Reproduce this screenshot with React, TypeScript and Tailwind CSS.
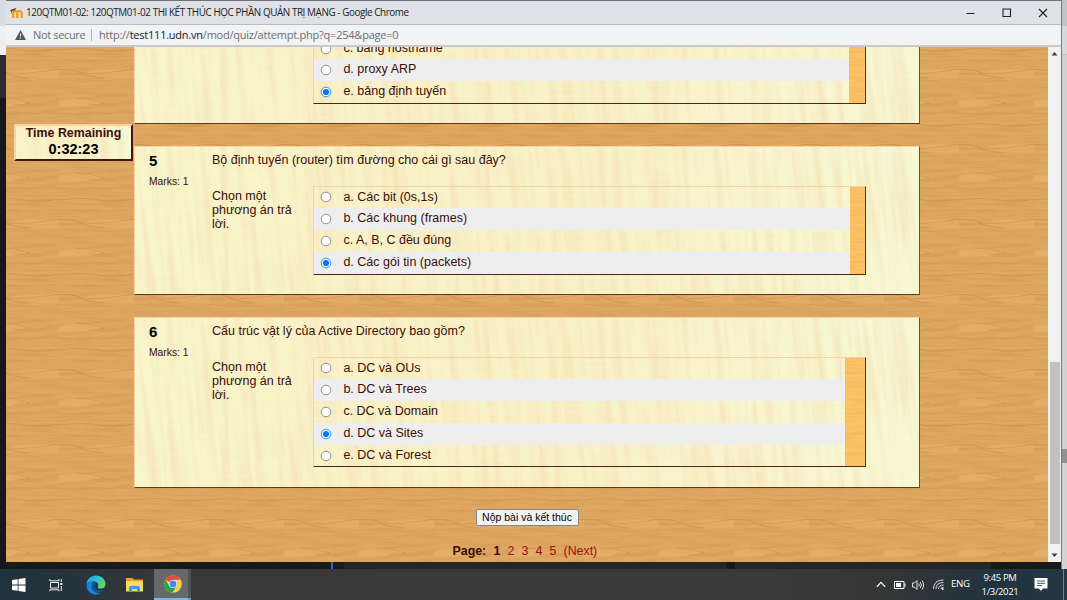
import type { ReactNode } from "react";

type Option = { label: string; checked?: boolean };

function WoodTexture() {
  return (
    <svg className="absolute inset-0 h-full w-full" aria-hidden="true">
      <defs>
        <filter id="wood-grain" x="0" y="0" width="100%" height="100%" colorInterpolationFilters="sRGB">
          <feTurbulence type="fractalNoise" baseFrequency="0.027 0.3" numOctaves="3" seed="8" stitchTiles="stitch" />
          <feColorMatrix values="0 0 0 0 0.74  0 0 0 0 0.49  0 0 0 0 0.24  2.2 0 0 0 -0.85" />
        </filter>
        <pattern id="wood" width="75" height="75" patternUnits="userSpaceOnUse" x="53" y="13">
          <rect width="75" height="75" fill="#dfa963" />
          <rect width="75" height="75" filter="url(#wood-grain)" opacity="0.33" />
          <path d="M0 40Q30 36 46 43Q30 47 0 46ZM75 10Q50 8 20 13Q40 18 75 17Z" fill="#e6b16c" opacity="0.6" />
          <g fill="none" stroke="#b97b38" strokeWidth="0.9" opacity="0.4">
            <path d="M0 10Q7 8 20 12T75 9" />
            <path d="M16 38Q32 38 46 43Q40 45 30 45" />
            <path d="M20 13Q30 17 45 18" />
            <path d="M0 65Q25 62 40 65T75 64" />
          </g>
        </pattern>
      </defs>
      <rect width="100%" height="100%" fill="url(#wood)" />
    </svg>
  );
}

function MapleTexture() {
  return (
    <svg className="absolute inset-0 h-full w-full" aria-hidden="true">
      <defs>
        <filter id="maple-grain" x="0" y="0" width="100%" height="100%" colorInterpolationFilters="sRGB">
          <feTurbulence type="fractalNoise" baseFrequency="0.13 0.009" numOctaves="3" seed="3" />
          <feColorMatrix values="0 0 0 0 0.95  0 0 0 0 0.76  0 0 0 0 0.56  2 0 0 0 -0.82" />
        </filter>
        <filter id="maple-cross" x="0" y="0" width="100%" height="100%" colorInterpolationFilters="sRGB">
          <feTurbulence type="fractalNoise" baseFrequency="0.012 0.3" numOctaves="2" seed="11" />
          <feColorMatrix values="0 0 0 0 1  0 0 0 0 1  0 0 0 0 0.86  1.4 0 0 0 -0.55" />
        </filter>
        <linearGradient id="maple-tone">
          <stop offset="0" stopColor="#f8f5cb" />
          <stop offset="0.2" stopColor="#f8f2c8" />
          <stop offset="0.55" stopColor="#f8f1c6" />
          <stop offset="0.75" stopColor="#f8f3cc" />
          <stop offset="1" stopColor="#f6f8d3" />
        </linearGradient>
      </defs>
      <rect width="100%" height="100%" fill="url(#maple-tone)" />
      <g transform="skewX(5)">
        <rect x="-40" width="900" height="240" filter="url(#maple-grain)" opacity="0.32" />
      </g>
      <rect width="100%" height="100%" filter="url(#maple-cross)" opacity="0.25" />
    </svg>
  );
}

function AmberTexture() {
  return (
    <svg className="absolute inset-0 h-full w-full" aria-hidden="true">
      <rect width="100%" height="100%" fill="#fdc166" />
      <rect width="100%" height="100%" filter="url(#wood-grain)" opacity="0.15" />
    </svg>
  );
}

function Radio({ checked }: { checked?: boolean }) {
  return (
    <svg width="12" height="12" viewBox="0 0 12 12" className="shrink-0">
      <circle cx="6" cy="6" r="4.8" fill="#fff" stroke={checked ? "#2684f5" : "#858585"} strokeWidth="0.9" />
      {checked && <circle cx="6" cy="6" r="3.1" fill="#0875f5" />}
    </svg>
  );
}

function Options({ options, gutter }: { options: Option[]; gutter: string }) {
  return (
    <div className="relative flex w-[553px] border border-t-[#fbd0a0] border-r-[#65351d] border-b-[#54251b] border-l-[#fbd0a0]">
      <div className="min-w-0 flex-1">
        {options.map((o, i) => (
          <div key={o.label} className={`flex h-[21.8px] items-center pl-[6px] ${i % 2 ? "bg-[#eeeeee]" : ""}`}>
            <Radio checked={o.checked} />
            <span className="-mt-px ml-[11.4px] whitespace-nowrap">{o.label}</span>
          </div>
        ))}
      </div>
      <div className={`relative shrink-0 ${gutter}`}>
        <AmberTexture />
      </div>
    </div>
  );
}

function Card({ className, children }: { className: string; children: ReactNode }) {
  return (
    <section
      className={`relative shrink-0 overflow-hidden border border-t-[#fcd3a0] border-r-[#7a4a25] border-b-[#5f3a1c] border-l-[#fcd3a0] ${className}`}
    >
      <MapleTexture />
      <div className="relative h-full">{children}</div>
    </section>
  );
}

function Question({ number, text, options, gutter }: { number: string; text: string; options: Option[]; gutter: string }) {
  return (
    <div className="flex pl-[14px]">
      <div className="w-[63px] pt-[5px]">
        <div className="text-[15px] leading-[18px] font-bold text-black">{number}</div>
        <div className="mt-[5px] text-[10.3px] leading-[13px]">Marks: 1</div>
      </div>
      <div>
        <div className="pt-[5px] leading-[16px] whitespace-nowrap">{text}</div>
        <div className="mt-[17.5px] flex">
          <div className="w-[101px] pt-[3.4px] pr-[14px] leading-[14px]">Chọn một phương án trả lời.</div>
          <Options options={options} gutter={gutter} />
        </div>
      </div>
    </div>
  );
}

function MoodleIcon() {
  return (
    <svg width="13" height="12" viewBox="0 0 13 12">
      <path d="M3.2 11V6.2Q3.2 4 5.2 4T7.3 6.2V11M7.3 6.2Q7.3 4 9.3 4T11.7 6.2V11" fill="none" stroke="#f59a0c" strokeWidth="2.2" />
      <path d="M0 3.2L6.5 .8L5 3.2L2 4L1.3 7L.8 4Z" fill="#50402c" />
    </svg>
  );
}

function TitleBar() {
  return (
    <header className="flex h-[24px] shrink-0 items-center border-b border-[#b9bcc1] bg-[#dee1e6] pl-[4px] text-[#202124]">
      <MoodleIcon />
      <span className="ml-[3px] text-[9.9px] tracking-[-0.42px] whitespace-nowrap">
        120QTM01-02: 120QTM01-02 THI KẾT THÚC HỌC PHẦN QUẢN TRỊ MẠNG - Google Chrome
      </span>
      <svg className="mr-[13px] ml-auto" width="82" height="10" viewBox="0 0 82 10" fill="none" stroke="#222" strokeWidth="1.1">
        <path d="M.5 5.5H8.5M73 1L81 9M81 1L73 9" />
        <path d="M37 1H44.5V8.5H37Z" />
      </svg>
    </header>
  );
}

function AddressBar() {
  return (
    <div className="flex h-[22px] shrink-0 items-center border-b-2 border-[#c7c9ce] bg-[#f1f3f5] pl-[9px] text-[11px] text-[#6b6e72]">
      <svg width="11" height="10" viewBox="0 0 11 10">
        <path d="M5.5 0L11 10H0Z" fill="#55585c" />
        <path d="M5.5 3.5V6.5M5.5 7.4V8.6" stroke="#f1f3f5" />
      </svg>
      <span className="ml-[7px] w-[52px] tracking-[-0.35px] whitespace-nowrap">Not secure</span>
      <span className="ml-[6px] h-[12px] w-px bg-[#aeb0b4]" />
      <span className="ml-[7px] tracking-[-0.23px] whitespace-nowrap">
        http://<span className="text-[#202124]">test111.udn.vn</span>/mod/quiz/attempt.php?q=254&amp;page=0
      </span>
    </div>
  );
}

function ScrollBar() {
  return (
    <div className="flex w-[13px] shrink-0 flex-col items-center bg-[#f1f1f1]">
      <svg width="11" height="14" viewBox="0 0 11 14">
        <path d="M2.5 8.5L5.5 5L8.5 8.5Z" fill="#444" />
      </svg>
      <div className="mt-[301px] h-[182px] w-[10px] bg-[#c1c1c1]" />
      <svg className="mt-auto" width="11" height="16" viewBox="0 0 11 16">
        <path d="M2.5 7.5L5.5 11L8.5 7.5Z" fill="#444" />
      </svg>
    </div>
  );
}

function EdgeIcon() {
  return (
    <svg width="20" height="20" viewBox="0 0 20 20">
      <defs>
        <linearGradient id="edge-top" x1="0" x2="1" y1="0.2" y2="0.6">
          <stop offset="0" stopColor="#18a5e8" />
          <stop offset="0.5" stopColor="#27c3d5" />
          <stop offset="1" stopColor="#67dc51" />
        </linearGradient>
      </defs>
      <path d="M.5 9C1 4 5 .5 10 .5C16 .5 19.5 5 19.5 8.8C19.5 12 17.3 13.7 14.5 13.7C12.3 13.7 11.3 12.7 11.8 11.8C14 8.5 10 5.8 6.2 6.3C3.5 6.6 1.4 8 .5 9Z" fill="url(#edge-top)" />
      <path d="M.5 9.4C1.8 6.7 5 5.7 8 6.4C6 8 5.3 10.3 6 13C7 17 11.3 18.7 15 17.5C13.5 19 11.7 19.5 10 19.5C4.5 19.5 .3 15 .5 9.4Z" fill="#1684d8" />
      <path d="M8 6.6C6 8 5.3 10.3 6 13C7.2 17.3 12.5 19.2 17.8 15.2C18.2 14.8 17.9 14.4 17.4 14.6C13.2 16.3 8.3 14.2 8.4 10.7C8.4 9.6 9 8.8 9.9 8.3C9.8 7.3 9 6.8 8 6.6Z" fill="#0b559f" />
    </svg>
  );
}

function FolderIcon() {
  return (
    <svg width="17" height="16" viewBox="0 0 17 16">
      <path d="M0 1H6.5L8 2.5H17V5H0Z" fill="#e9a526" />
      <path d="M0 4.2H17V14.5H0Z" fill="#ffd963" />
      <path d="M3 15V10.5Q3 9 4.5 9H12.5Q14 9 14 10.5V15H11V12H6V15Z" fill="#3d9de2" />
    </svg>
  );
}

function ChromeIcon() {
  return (
    <svg width="18" height="18" viewBox="0 0 18 18">
      <circle cx="9" cy="9" r="8.8" fill="#fbd04a" />
      <path d="M9 9L1.4 4.6A8.8 8.8 0 0 1 16.6 4.8H9Z" fill="#e04a3f" />
      <path d="M1.4 4.6A8.8 8.8 0 0 0 8.3 17.8L12.7 11.1L9 9L5.2 11.1Z" fill="#23a15b" />
      <circle cx="9" cy="9" r="4" fill="#fff" />
      <circle cx="9" cy="9" r="3.4" fill="#4587ef" />
    </svg>
  );
}

function Taskbar() {
  return (
    <footer className="flex h-[31px] shrink-0 items-center bg-[linear-gradient(90deg,#1f323e_0%,#26343c_7%,#383838_15%,#393939_70%,#343536_84%,#20333f_93%,#243743_100%)] text-[10px] text-white">
      <svg className="ml-[12px]" width="14" height="14" viewBox="0 0 14 14">
        <path d="M0 2L5.7 1.2V6.5H0ZM6.5 1.1L13.5 .1V6.5H6.5ZM0 7.4H5.7V12.7L0 11.9ZM6.5 7.4H13.5V13.9L6.5 12.9Z" fill="#fff" />
      </svg>
      <svg className="ml-[23px]" width="14" height="14" viewBox="0 0 14 14" fill="none" stroke="#ededed">
        <path d="M1.5 4.5H9.5V10H1.5ZM.8 1V2.8H10V1M.8 13.2V11.8H10V13.2M12.3 1V4M12.3 8V13" />
        <path d="M11.3 5H13.3V7H11.3Z" fill="#fff" stroke="none" />
      </svg>
      <div className="ml-[23px]"><EdgeIcon /></div>
      <div className="ml-[20px]"><FolderIcon /></div>
      <div className="ml-[11px] flex h-full w-[34px] items-center justify-center border-b-2 border-[#75b8ef] bg-[#666869] pl-[3px]">
        <ChromeIcon />
      </div>
      <div className="h-full w-[3px] border-b-2 border-[#629bcb] bg-[#4f5253]" />
      <div className="ml-auto flex h-full items-center">
        <svg width="10" height="7" viewBox="0 0 10 7"><path d="M.8 5.8L5 1.4L9.2 5.8" fill="none" stroke="#fff" strokeWidth="1.2" /></svg>
        <svg className="ml-[8px]" width="12" height="8" viewBox="0 0 12 8">
          <path d="M.5 .5H10V7.5H.5ZM11 2.5V5.5" fill="none" stroke="#fff" />
          <path d="M2 2H7V6H2Z" fill="#fff" />
        </svg>
        <svg className="ml-[6px]" width="13" height="12" viewBox="0 0 13 12" fill="none" stroke="#eee" strokeWidth="0.9">
          <path d="M.5 4H2.5L5 1.5V10.5L2.5 8H.5ZM6.7 4.5Q8 6 6.7 7.5M8.3 3Q10.5 6 8.3 9M10 1.5Q13.3 6 10 10.5" />
        </svg>
        <svg className="ml-[8px]" width="11" height="11" viewBox="0 0 11 11" fill="none" stroke="#d4d4d4">
          <path d="M.5 10Q.5 1 10.5 1M3 10Q3 3.5 10.5 3.5M5.5 10Q5.5 6 10.5 6M8 10Q8 8.2 10.5 8.2" />
          <circle cx="9.7" cy="10" r="1" fill="#fff" stroke="none" />
        </svg>
        <span className="ml-[7px] w-[20px] text-[9.7px] tracking-[-0.3px]">ENG</span>
        <div className="ml-[9px] w-[40px] text-center text-[9.5px] leading-[14px] tracking-[-0.35px] whitespace-nowrap">
          <div>9:45 PM</div>
          <div>1/3/2021</div>
        </div>
        <svg className="ml-[14px]" width="14" height="15" viewBox="0 0 14 15">
          <path d="M.5 1H13.5V11.5H9L7 14L5 11.5H.5Z" fill="#fff" />
          <path d="M3 4H11M3 6.3H11M3 8.6H8" stroke="#34434a" strokeWidth="0.9" />
        </svg>
        <div className="ml-[15px] h-full w-px bg-[#718089]" />
        <div className="w-[3px]" />
      </div>
    </footer>
  );
}

export default function App() {
  return (
    <div className="flex h-[600px] w-[1067px] flex-col overflow-hidden bg-[#17191b] font-['Open_Sans','Noto_Sans',sans-serif]">
      <div className="flex h-[569px] shrink-0">
        <div className="flex w-[6px] shrink-0 flex-col">
          <div className="h-[26px] bg-[#d7dbe2]" />
          <div className="h-[29px] bg-[#eff0f2]" />
          <div className="h-[43px] bg-[#292b2e]" />
          <div className="flex-1 bg-[#151719]" />
        </div>
        <div className="flex w-[1055px] shrink-0 flex-col">
          <div className="flex h-[562px] shrink-0 flex-col border-t border-[#747579]">
            <TitleBar />
            <AddressBar />
            <div className="flex min-h-0 flex-1">
              <main className="relative flex min-w-0 flex-1 overflow-hidden font-['Liberation_Sans',Arial,sans-serif] text-[12.5px] text-[#3a0e08]">
                <WoodTexture />
                <div className="relative w-[128px] shrink-0 pt-[77px] pl-[8px]">
                  <div className="relative h-[37px] w-[119px] overflow-hidden border-2 border-t-[#fcd3a0] border-r-[#451510] border-b-[#451510] border-l-[#fcd3a0] text-center font-bold">
                    <MapleTexture />
                    <div className="relative text-[12.4px] leading-[15px] whitespace-nowrap">Time Remaining</div>
                    <div className="relative text-[14.5px] leading-[17px] text-black">0:32:23</div>
                  </div>
                </div>
                <div className="relative flex w-[786px] shrink-0 flex-col">
                  <Card className="h-[77px] border-t-0">
                    <div className="-mt-[10.4px] pl-[178px]">
                      <Options
                        options={[{ label: "c. bảng hostname" }, { label: "d. proxy ARP" }, { label: "e. bảng định tuyến", checked: true }]}
                        gutter="w-[16px]"
                      />
                    </div>
                  </Card>
                  <Card className="mt-[22px] h-[149px]">
                    <Question
                      number="5"
                      text="Bộ định tuyến (router) tìm đường cho cái gì sau đây?"
                      gutter="w-[15px]"
                      options={[
                        { label: "a. Các bit (0s,1s)" },
                        { label: "b. Các khung (frames)" },
                        { label: "c. A, B, C đều đúng" },
                        { label: "d. Các gói tin (packets)", checked: true },
                      ]}
                    />
                  </Card>
                  <Card className="mt-[22px] h-[171px]">
                    <Question
                      number="6"
                      text="Cấu trúc vật lý của Active Directory bao gồm?"
                      gutter="w-[20px]"
                      options={[
                        { label: "a. DC và OUs" },
                        { label: "b. DC và Trees" },
                        { label: "c. DC và Domain" },
                        { label: "d. DC và Sites", checked: true },
                        { label: "e. DC và Forest" },
                      ]}
                    />
                  </Card>
                  <div className="flex flex-col items-center pt-[21px]">
                    <button className="flex h-[17px] w-[103px] items-center justify-center rounded-[2px] border border-[#858585] bg-[#f3f3f3] text-[10.5px] whitespace-nowrap text-black">
                      Nộp bài và kết thúc
                    </button>
                    <nav className="mt-[17px] ml-[-4px] flex w-[145px] text-[12.4px] leading-[16px] whitespace-nowrap text-[#a30d0d]">
                      <span className="w-[41px] font-bold text-[#3a0e08]">Page:</span>
                      <span className="w-[14px] font-bold text-[#3a0e08]">1</span>
                      <a className="w-[14px]">2</a>
                      <a className="w-[14px]">3</a>
                      <a className="w-[14px]">4</a>
                      <a className="w-[14px]">5</a>
                      <a>(Next)</a>
                    </nav>
                  </div>
                </div>
              </main>
              <ScrollBar />
            </div>
          </div>
          <div className="flex h-[7px] bg-[#18191b]">
            <div className="ml-[325px] h-full w-[2px] bg-[#286bc0]" />
            <div className="ml-[11px] h-full w-[383px] bg-[#252628]" />
            <div className="ml-[8px] h-full w-[256px] bg-[#252628]" />
          </div>
        </div>
        <div className="flex w-[6px] shrink-0 flex-col border-l border-[#76797d] bg-[#d3d3d3]">
          <div className="h-[26px] bg-[#c0c2c6]" />
          <div className="h-[28px] bg-[#d7d8da]" />
          <div className="h-[395px] border-t border-[#c0c0c0] bg-[#d0d0d0]" />
          <div className="h-[14px] bg-[#929292]" />
        </div>
      </div>
      <Taskbar />
    </div>
  );
}
